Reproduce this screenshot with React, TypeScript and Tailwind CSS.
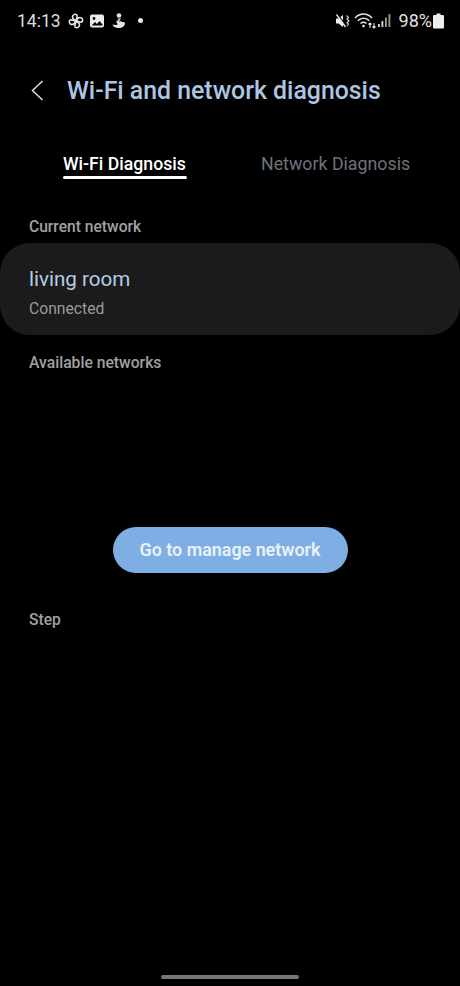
import React from "react";

function StatusLeft() {
  return (
    <div className="flex items-center">
      <span className="text-[17.5px] leading-[20px] text-[#dcdcdc] w-[44px] ml-[17px]">14:13</span>
      <svg width="18" height="18" viewBox="0 0 18 18" className="ml-[6px]" fill="none" stroke="#e4e4e4" strokeWidth="1.6">
        <path d="M9 8.500C6.500 8 5.500 7 5.500 5a2.700 2.700 0 0 1 4.200-2.200C11 4 9.500 6.500 9 8.500Z" />
        <path d="M9.500 9C10 6.500 11 5.500 13 5.500a2.700 2.700 0 0 1 2.200 4.200C14 11 11.500 9.500 9.500 9Z" />
        <path d="M9 9.500C11.500 10 12.500 11 12.500 13a2.700 2.700 0 0 1-4.200 2.200C7 14 8.500 11.500 9 9.500Z" />
        <path d="M8.500 9C8 11.500 7 12.500 5 12.500a2.700 2.700 0 0 1-2.200-4.200C4 7 6.500 8.500 8.500 9Z" />
      </svg>
      <svg width="16" height="16" viewBox="0 0 16 16" className="ml-[4px]">
        <rect x="1" y="1.500" width="14" height="13" rx="2" fill="#ececec" />
        <circle cx="5" cy="5.500" r="1.400" fill="#000" />
        <path d="M2.500 12.500l3.500-3.500 2 2 2.500-3 3 3.500v1H2.500Z" fill="#000" />
      </svg>
      <svg width="16" height="18" viewBox="0 0 16 18" className="ml-[6px]" fill="#e4e4e4">
        <circle cx="8" cy="3.500" r="2.300" />
        <path d="M6 6.500h4L7.500 10c1-.8 3-1 4 .2.800-.5 1.500-.2 2.500.3 0 3-2 5.500-6 5.500-3 0-6-1-6.500-3.500 2 .8 4.500.6 5.500-.5-1.500-.500-2-2-1-3.300L8 7.500Z" />
      </svg>
      <span className="ml-[11px] w-[5px] h-[5px] rounded-full bg-[#e8e8e8]" />
    </div>
  );
}

function StatusRight() {
  return (
    <div className="flex items-center mr-[16px]">
      <svg width="16" height="16" viewBox="0 0 16 16" fill="#ececec">
        <path d="M1 5.500h2.500L8 2v12L3.500 10.500H1Z" />
        <path d="M2.500 1.500l9 12.500" stroke="#000" strokeWidth="1.800" />
        <path d="M1.500 1.500l9 12.500" stroke="#ececec" strokeWidth="1.300" />
        <path d="M11.500 2.500l2 2-1.500 1.500 2 2-2 1.500 1.500 1.500-1.500 2" fill="none" stroke="#dcdcdc" strokeWidth="1.100" />
      </svg>
      <svg width="24" height="17" viewBox="0 0 24 17" className="ml-[3px]" fill="none" stroke="#e8e8e8" strokeWidth="1.500">
        <path d="M1 6c5-5.200 12-5.200 17 0" />
        <path d="M3.800 8.800c3.500-3.400 8-3.400 11.500 0" />
        <path d="M6.500 11.500c2-1.700 4-1.700 6 0" />
        <circle cx="9.500" cy="14" r="1.300" fill="#e8e8e8" stroke="none" />
        <path d="M16 11v5M14.500 12.500 16 11l1.500 1.500M20 11v5M18.500 14.500 20 16l1.500-1.500" strokeWidth="1.100" />
      </svg>
      <svg width="14" height="15" viewBox="0 0 14 15" fill="#dcdcdc">
        <rect x="0" y="11" width="1.800" height="3" />
        <rect x="3.500" y="8" width="1.800" height="6" />
        <rect x="7" y="4.500" width="1.800" height="9.500" fill="#9a9a9a" />
        <rect x="10.500" y="1" width="1.800" height="13" fill="#9a9a9a" />
      </svg>
      <span className="text-[18px] leading-[20px] text-[#e0e0e0] ml-[7px]">98%</span>
      <svg width="11" height="16" viewBox="0 0 11 16" className="ml-[1px]" fill="#ededed">
        <path d="M3.500 0.500h4V2H10a1 1 0 0 1 1 1v11.500a1 1 0 0 1-1 1H1a1 1 0 0 1-1-1V3a1 1 0 0 1 1-1h2.500Z" />
      </svg>
    </div>
  );
}

export default function App() {
  return (
    <div className="w-[460px] h-[986px] bg-black flex flex-col overflow-hidden" style={{ fontFamily: "Roboto, 'Noto Sans', sans-serif" }}>
      <div className="flex items-center justify-between h-[19px] mt-[11px]">
        <StatusLeft />
        <StatusRight />
      </div>

      <div className="flex items-center mt-[46px] h-[30px]">
        <svg width="14" height="24" viewBox="0 0 14 24" className="ml-[30px]" fill="none" stroke="#dcdfe3" strokeWidth="1.500">
          <path d="M12.500 2 2.500 11.500 12.500 21" />
        </svg>
        <h1 className="ml-[23px] text-[24.85px] leading-[30px] font-medium text-[#adc5e0] whitespace-nowrap">Wi-Fi and network diagnosis</h1>
      </div>

      <div className="flex mt-[48px] h-[34px]">
        <div className="ml-[63px] w-[124px] flex flex-col">
          <span className="text-[17.7px] leading-[20px] font-medium text-white whitespace-nowrap">Wi-Fi Diagnosis</span>
          <span className="mt-[2px] h-[3px] rounded-full bg-white" />
        </div>
        <span className="ml-[74px] text-[17.8px] leading-[20px] text-[#6d727b] whitespace-nowrap">Network Diagnosis</span>
      </div>

      <p className="ml-[29px] mt-[29px] text-[15.6px] leading-[20px] font-medium text-[#a0a0a0]">Current network</p>

      <div className="mt-[6px] h-[92px] rounded-[30px] bg-[#1b1b1b] pl-[29px] pt-[23px]">
        <p className="text-[20.6px] leading-[26px] text-[#b5cce6]">living room</p>
        <p className="mt-[7px] text-[15.7px] leading-[20px] text-[#9a9a9a]">Connected</p>
      </div>

      <p className="ml-[29px] mt-[18px] text-[15.7px] leading-[20px] font-medium text-[#a0a0a0]">Available networks</p>

      <button className="self-center mt-[154px] w-[235px] h-[46px] pt-[1px] rounded-full bg-[#7eaee3] text-[#e9f2fb] text-[17.9px] font-semibold">
        Go to manage network
      </button>

      <p className="ml-[29px] mt-[37px] text-[15.6px] leading-[20px] font-medium text-[#a0a0a0]">Step</p>

      <div className="mt-auto mb-[7px] self-center w-[138px] h-[4px] rounded-full bg-[#767676]" />
    </div>
  );
}
